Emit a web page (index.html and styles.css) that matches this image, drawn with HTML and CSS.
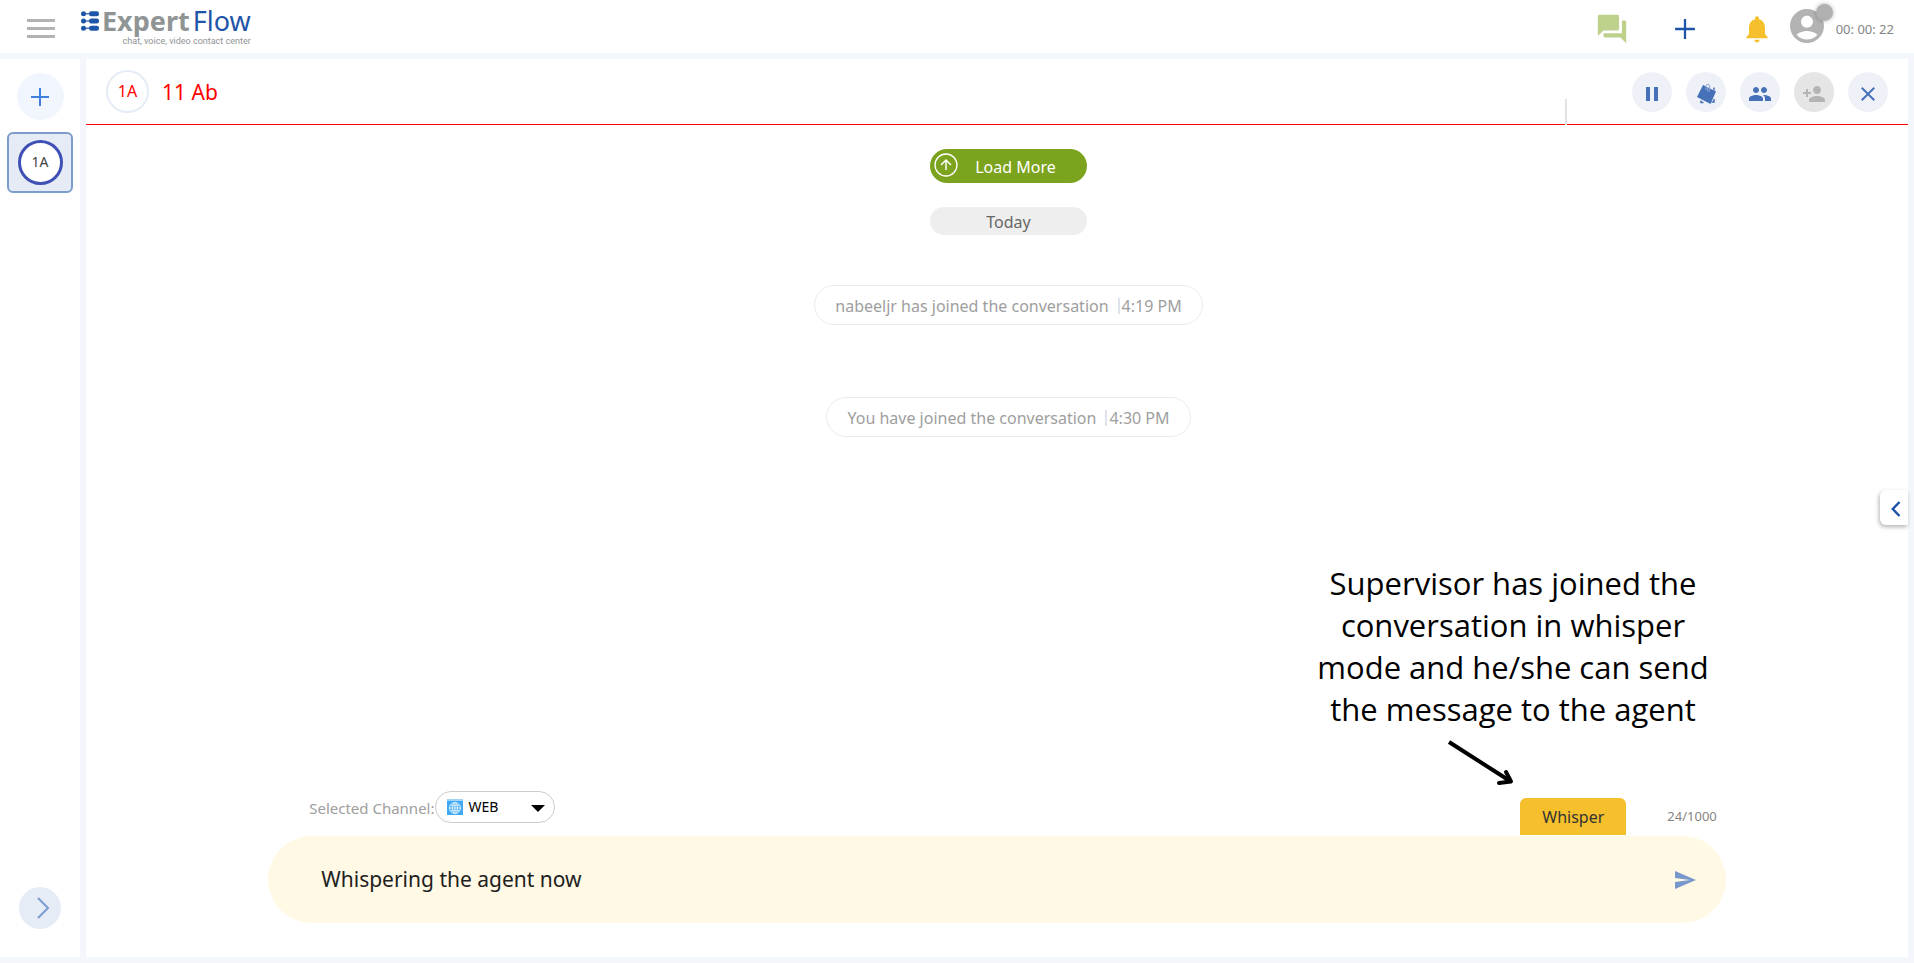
FILE: index.html
```html
<!DOCTYPE html>
<html lang="en">
<head>
<meta charset="utf-8">
<meta name="viewport" content="width=device-width, initial-scale=1">
<title>ExpertFlow</title>
<link rel="stylesheet" href="styles.css">
</head>
<body>
<div class="app">
  <header class="topbar">
    <button class="icon-btn menu-btn" aria-label="Menu">
      <svg width="28" height="20" viewBox="0 0 28 20" fill="#b3b3b3"><path d="M0 0h28v3H0zM0 8h28v3H0zM0 16h28v3H0z"/></svg>
    </button>
    <a class="logo" href="#" aria-label="ExpertFlow home">
      <svg class="logo-mark" width="18" height="20" viewBox="0 0 18 20" fill="#1f55a8">
        <circle cx="2.5" cy="2.8" r="2.5"/><rect x="4" y="2.2" width="6" height="1.2"/><rect x="8" y=".3" width="10" height="5" rx="2.3"/>
        <circle cx="2.5" cy="10" r="2.5"/><rect x="4" y="9.4" width="6" height="1.2"/><rect x="8" y="7.5" width="10" height="5" rx="2.3"/>
        <circle cx="2.5" cy="17.2" r="2.5"/><rect x="4" y="16.6" width="6" height="1.2"/><rect x="8" y="14.7" width="10" height="5" rx="2.3"/>
      </svg>
      <span class="logo-text">
        <span class="logo-name"><b>Expert</b><span class="logo-flow">Flow</span></span>
        <span class="logo-tag">chat, voice, video contact center</span>
      </span>
    </a>
    <div class="top-actions">
      <button class="icon-btn" aria-label="Conversations">
        <svg width="34" height="34" viewBox="0 0 24 24" fill="#bdd18d"><path d="M21 6h-2v9H6v2c0 .55.45 1 1 1h11l4 4V7c0-.55-.45-1-1-1zm-4 6V3c0-.55-.45-1-1-1H3c-.55 0-1 .45-1 1v14l4-4h10c.55 0 1-.45 1-1z"/></svg>
      </button>
      <button class="icon-btn" aria-label="New">
        <svg width="34" height="34" viewBox="0 0 24 24" fill="#1f55a8"><path d="M19 12.8h-6.2V19h-1.6v-6.2H5v-1.6h6.2V5h1.6v6.2H19z"/></svg>
      </button>
      <button class="icon-btn" aria-label="Notifications">
        <svg width="32" height="32" viewBox="0 0 24 24" fill="#f6c02d"><path d="M12 22c1.1 0 2-.9 2-2h-4c0 1.1.89 2 2 2zm6-6v-5c0-3.07-1.64-5.64-4.500-6.320V4c0-.83-.67-1.500-1.500-1.500s-1.500.67-1.500 1.500v.68C7.630 5.360 6 7.920 6 11v5l-2 2v1h16v-1l-2-2z"/></svg>
      </button>
      <button class="icon-btn avatar" aria-label="Agent status">
        <svg width="34" height="34" viewBox="2 2 20 20" fill="#b3b3b3"><path d="M12 2C6.480 2 2 6.480 2 12s4.480 10 10 10 10-4.480 10-10S17.520 2 12 2zm0 4c1.930 0 3.500 1.570 3.500 3.500S13.930 13 12 13s-3.500-1.570-3.500-3.500S10.070 6 12 6zm0 14c-2.030 0-4.430-.82-6.140-2.880C7.550 15.800 9.680 15 12 15s4.450.8 6.140 2.120C16.430 19.180 14.030 20 12 20z"/></svg>
        <span class="status-dot"></span>
      </button>
      <span class="timer">00: 00: 22</span>
    </div>
  </header>

  <nav class="sidebar">
    <button class="add-chat" aria-label="Add chat">
      <svg width="20" height="20" viewBox="0 0 20 20" fill="#3f7fe0"><path d="M9 1h2v8h8v2h-8v8H9v-8H1V9h8z"/></svg>
    </button>
    <button class="chat-tab"><span class="chat-badge">1A</span></button>
    <button class="expand-btn" aria-label="Expand">
      <svg width="14" height="22" viewBox="0 0 14 22" fill="none" stroke="#7c9bd0" stroke-width="2"><path d="M2 1l10 10L2 21"/></svg>
    </button>
  </nav>

  <main class="panel">
    <div class="chat-head">
      <span class="contact-badge">1A</span>
      <h1 class="contact-name">11 Ab</h1>
      <span class="head-divider"></span>
      <div class="head-actions">
        <button class="round-btn" aria-label="Pause"><svg width="24" height="24" viewBox="0 0 24 24"><path d="M6 5h4v14H6zm8 0h4v14h-4z"/></svg></button>
        <button class="round-btn" aria-label="Wrap up"><svg width="24" height="24" viewBox="0 0 24 24"><path d="M9 3l13 6.500-5.500 12.500L3 15z"/><path d="M20 5.500v3M20 17v3h-2.500M9.500 20.500H7v-2" fill="none" stroke="#4671b8" stroke-width="1.500"/><path d="M12 8V4a1.800 1.800 0 0 1 3.600 0v4.500a1 1 0 0 1-2 0V5" fill="none" stroke="#8da8d4" stroke-width="1"/></svg></button>
        <button class="round-btn" aria-label="Participants"><svg width="24" height="24" viewBox="0 0 24 24"><path d="M16 11c1.660 0 2.990-1.340 2.990-3S17.660 5 16 5c-1.660 0-3 1.340-3 3s1.340 3 3 3zm-8 0c1.660 0 2.990-1.340 2.990-3S9.660 5 8 5C6.340 5 5 6.340 5 8s1.340 3 3 3zm0 2c-2.330 0-7 1.170-7 3.500V19h14v-2.500c0-2.330-4.670-3.500-7-3.500zm8 0c-.29 0-.62.02-.97.05 1.160.84 1.970 1.970 1.970 3.450V19h6v-2.500c0-2.330-4.670-3.500-7-3.500z"/></svg></button>
        <button class="round-btn round-btn-off" aria-label="Add participant" disabled><svg width="24" height="24" viewBox="0 0 24 24"><path d="M15 12c2.210 0 4-1.790 4-4s-1.790-4-4-4-4 1.790-4 4 1.790 4 4 4zm-9-2V7H4v3H1v2h3v3h2v-3h3v-2H6zm9 4c-2.670 0-8 1.340-8 4v2h16v-2c0-2.660-5.330-4-8-4z"/></svg></button>
        <button class="round-btn" aria-label="Close"><svg width="24" height="24" viewBox="0 0 24 24"><path d="M19 6.410L17.590 5 12 10.590 6.410 5 5 6.410 10.590 12 5 17.590 6.410 19 12 13.410 17.590 19 19 17.590 13.410 12z"/></svg></button>
      </div>
    </div>

    <div class="messages">
      <button class="load-more">
        <svg width="24" height="24" viewBox="0 0 24 24" fill="none" stroke="#fff"><circle cx="12" cy="12" r="11" stroke-width="1.300"/><path d="M12 17V7M7 12l5-5 5 5" stroke-width="1.500"/></svg>
        <span>Load More</span>
      </button>
      <span class="day">Today</span>
      <p class="notice">nabeeljr has joined the conversation<time>4:19 PM</time></p>
      <p class="notice">You have joined the conversation<time>4:30 PM</time></p>
    </div>

    <form class="composer">
      <div class="composer-meta">
        <label for="channel">Selected Channel:</label>
        <div class="channel">
          <svg class="channel-icon" width="16" height="16" viewBox="0 0 16 16"><rect width="16" height="16" fill="#3fa9f5"/><rect width="16" height="2" fill="#9fd3f8"/><g fill="none" stroke="#d9eefc" stroke-width="1"><circle cx="8" cy="9" r="5.500"/><ellipse cx="8" cy="9" rx="2.500" ry="5.500"/><path d="M2.500 9h11M3.500 6.300h9M3.500 11.700h9M8 3.500v11"/></g></svg>
          <select id="channel"><option>WEB</option></select>
          <svg class="channel-caret" width="14" height="7" viewBox="0 0 14 7"><path d="M0 0h14L7 7z"/></svg>
        </div>
        <button type="button" class="whisper">Whisper</button>
        <span class="counter">24/1000</span>
      </div>
      <div class="composer-bar">
        <input type="text" aria-label="Message" value="Whispering the agent now">
        <button type="button" class="icon-btn" aria-label="Send"><svg width="24" height="24" viewBox="0 0 24 24" fill="#7898cc"><path d="M2 21l21-9L2 3v7l15 2-15 2z"/></svg></button>
      </div>
    </form>

    <aside class="callout">
      <p>Supervisor has joined the<br>conversation in whisper<br>mode and he/she can send<br>the message to the agent</p>
      <svg class="callout-arrow" width="70" height="48" viewBox="0 0 70 48" fill="none" stroke="#000" stroke-width="4" stroke-linejoin="round"><path d="M2 2l61 39" /><path d="M59 32l5 9.500-12 1.500" stroke-linecap="round"/></svg>
    </aside>

    <button class="drawer-btn" aria-label="Open details">
      <svg width="10" height="16" viewBox="0 0 10 16" fill="none" stroke="#1f55a8" stroke-width="2.500"><path d="M8.500 1L1.800 8l6.700 7"/></svg>
    </button>
  </main>
</div>
</body>
</html>
```
FILE: styles.css
```css
* { box-sizing: border-box; }

body {
  margin: 0;
  font-family: "Noto Sans", "Open Sans", sans-serif;
  font-size: 16px;
  color: #212121;
}

button, input, select { font: inherit; color: inherit; }

button {
  display: flex;
  align-items: center;
  justify-content: center;
  border: 0;
  padding: 0;
  background: none;
  cursor: pointer;
}

svg { display: block; flex: none; }

.app {
  display: grid;
  grid-template: 53px 1fr / 80px 1fr;
  gap: 6px;
  height: 100vh;
  padding: 0 6px 6px 0;
  background: #f3f6fb;
}

/* Top bar */
.topbar {
  grid-column: 1 / -1;
  display: flex;
  align-items: center;
  margin-right: -6px;
  padding: 0 20px 0 27px;
  background: #fff;
}

.menu-btn { margin-top: 4px; }

.logo {
  display: flex;
  gap: 3px;
  margin-left: 26px;
  text-decoration: none;
}

.logo-mark { margin-top: 4px; }

.logo-text {
  display: flex;
  flex-direction: column;
  align-items: flex-end;
}

.logo-name {
  display: flex;
  gap: 3px;
  font-size: 27px;
  line-height: 28px;
  color: #8f9494;
}

.logo-flow { color: #1f55a8; }

.logo-tag {
  font-family: Roboto, "Noto Sans", sans-serif;
  font-size: 9px;
  line-height: 12px;
  color: #8f9494;
}

.top-actions {
  display: flex;
  align-items: center;
  gap: 39px;
  margin-left: auto;
  padding-top: 4px;
}

.avatar {
  position: relative;
  margin: -6px 0 0 -22px;
}

.status-dot {
  position: absolute;
  top: -5px;
  right: -9px;
  width: 17px;
  height: 17px;
  border-radius: 50%;
  background: #b0b0b0;
  box-shadow: 0 0 4px rgba(0, 0, 0, .3);
}

.timer {
  margin-left: -27px;
  font-size: 13px;
  color: #858585;
}

/* Sidebar */
.sidebar {
  display: flex;
  flex-direction: column;
  align-items: center;
  padding: 14px 0 28px;
  background: #fff;
}

.add-chat {
  width: 47px;
  height: 47px;
  border-radius: 50%;
  background: #f1f6fe;
}

.chat-tab {
  width: 66px;
  height: 61px;
  margin-top: 12px;
  border: 2px solid #7c9ccd;
  border-radius: 6px;
  background: #e6ecf6;
}

.chat-badge {
  width: 45px;
  height: 45px;
  border: 3px solid #3f51b5;
  border-radius: 50%;
  background: #fff;
  font-size: 14px;
  line-height: 38px;
  color: #444;
}

.expand-btn {
  width: 42px;
  height: 42px;
  margin-top: auto;
  padding-left: 5px;
  border-radius: 50%;
  background: #e6ecf6;
}

/* Conversation panel */
.panel {
  position: relative;
  display: flex;
  flex-direction: column;
  background: #fff;
}

.chat-head {
  display: flex;
  align-items: center;
  height: 66px;
  padding: 0 20px;
  border-bottom: 1px solid #f00;
  color: #f00;
}

.contact-badge {
  width: 43px;
  height: 43px;
  border: 2px solid #e6ecf6;
  border-radius: 50%;
  line-height: 39px;
  text-align: center;
}

.contact-name {
  margin: 0 0 0 13px;
  font-size: 21px;
  font-weight: 400;
  line-height: 30px;
}

.head-divider {
  align-self: flex-end;
  width: 2px;
  height: 26px;
  margin: 0 65px -1px auto;
  background: #e3e3e3;
}

.head-actions {
  display: flex;
  gap: 14px;
}

.round-btn {
  width: 40px;
  height: 40px;
  padding-top: 4px;
  border-radius: 50%;
  background: #eef2f8;
  fill: #4671b8;
}

.round-btn-off {
  background: #e5e5e5;
  fill: #b4b4b4;
}

.messages {
  flex: 1;
  display: flex;
  flex-direction: column;
  align-items: center;
  padding: 24px 0 0 23px;
}

.load-more {
  justify-content: flex-start;
  width: 157px;
  height: 34px;
  padding: 0 14px 2px 4px;
  border-radius: 17px;
  background: #7ba31d;
  color: #fff;
}

.load-more span {
  flex: 1;
  padding-top: 4px;
}

.day {
  width: 157px;
  height: 28px;
  margin-top: 24px;
  padding-top: 1px;
  border-radius: 14px;
  background: #eee;
  line-height: 28px;
  text-align: center;
  color: #666;
}

.notice {
  display: flex;
  align-items: center;
  height: 40px;
  margin: 50px 0 0;
  padding: 2px 20px 0;
  border: 1px solid #ebebeb;
  border-radius: 20px;
  color: #9e9e9e;
}

.notice + .notice { margin-top: 72px; }

.notice time {
  margin-left: 9px;
  padding-left: 2px;
  border-left: 2px solid #dfe3ee;
  line-height: 16px;
}

/* Composer */
.composer {
  width: 80%;
  margin: 0 auto 34px;
}

.composer-meta {
  display: flex;
  align-items: flex-end;
  padding: 0 9px 1px 41px;
  font-size: 14px;
  line-height: 20px;
  color: #9e9e9e;
}

.composer-meta label {
  margin-bottom: 17px;
  font-size: 15px;
}

.channel {
  position: relative;
  margin: 0 auto 12px 1px;
}

.channel select {
  appearance: none;
  display: block;
  width: 120px;
  height: 32px;
  padding: 0 32px;
  border: 1px solid #ccc;
  border-radius: 16px;
  background: #fff;
  color: #000;
}

.channel-icon {
  position: absolute;
  top: 8px;
  left: 12px;
}

.channel-caret {
  position: absolute;
  top: 14px;
  right: 10px;
}

.whisper {
  width: 106px;
  height: 37px;
  margin-right: 41px;
  border-radius: 6px 6px 0 0;
  background: #f6c02d;
  font-size: 16px;
  color: #333;
}

.counter {
  margin-bottom: 9px;
  font-size: 13px;
  color: #858585;
}

.composer-bar {
  display: flex;
  align-items: center;
  height: 87px;
  padding: 0 29px 0 53px;
  border-radius: 44px;
  background: #fff9e5;
}

.composer-bar input {
  flex: 1;
  min-width: 0;
  height: 40px;
  padding: 0 0 2px;
  border: 0;
  outline: 0;
  background: none;
  font-size: 21px;
}

/* Callout over the conversation */
.callout {
  position: absolute;
  right: 190px;
  bottom: 169px;
  width: 410px;
  font-family: "Open Sans", "Noto Sans", sans-serif;
  color: #000;
}

.callout p {
  margin: 0;
  font-size: 31px;
  line-height: 42px;
  text-align: center;
}

.callout-arrow { margin: 10px 0 0 139px; }

.drawer-btn {
  position: absolute;
  right: 0;
  top: 431px;
  width: 28px;
  height: 35px;
  padding: 2px 0 0 4px;
  border-radius: 6px 0 0 6px;
  background: #fff;
  box-shadow: -1px 2px 4px rgba(0, 0, 0, .3);
}
```
